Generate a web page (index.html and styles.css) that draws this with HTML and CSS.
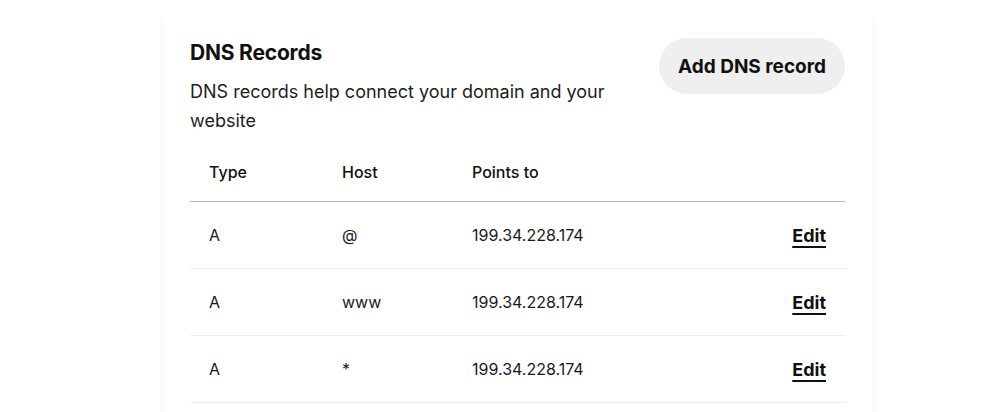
FILE: index.html
```html
<!DOCTYPE html>
<html lang="en">
<head>
<meta charset="utf-8">
<title>DNS Records</title>
<link rel="stylesheet" href="styles.css">
</head>
<body>
<main class="card">
  <header class="card-head">
    <div class="intro">
      <h2 class="title">DNS Records</h2>
      <p class="desc">DNS records help connect your domain and your website</p>
    </div>
    <button class="add-btn" type="button">Add DNS record</button>
  </header>
  <div class="table">
    <div class="row head">
      <span>Type</span><span>Host</span><span>Points to</span><span></span>
    </div>
    <div class="row">
      <span>A</span><span>@</span><span>199.34.228.174</span><a class="edit" href="#">Edit</a>
    </div>
    <div class="row">
      <span>A</span><span>www</span><span>199.34.228.174</span><a class="edit" href="#">Edit</a>
    </div>
    <div class="row">
      <span>A</span><span>*</span><span>199.34.228.174</span><a class="edit" href="#">Edit</a>
    </div>
  </div>
</main>
</body>
</html>
```
FILE: styles.css
```css
* { box-sizing: border-box; }
html, body {
  margin: 0;
  background: #ffffff;
  font-family: Inter, "Noto Sans", "Liberation Sans", sans-serif;
  color: #111111;
}
body {
  padding-top: 18px;
}
.card {
  width: 713px;
  margin-left: 161px;
  border-left: 1px solid #f1f1f1;
  border-right: 1px solid #f1f1f1;
  padding: 20px 28px 0 28px;
  min-height: 400px;
}
.card-head {
  display: flex;
  justify-content: space-between;
  align-items: flex-start;
}
.intro {
  max-width: 440px;
}
.title {
  margin: 0;
  padding-top: 1px;
  font-size: 21px;
  font-weight: 700;
  letter-spacing: -0.2px;
  line-height: 28px;
}
.desc {
  margin: 10px 0 0;
  font-size: 18px;
  line-height: 29px;
  color: #1d1d1d;
}
.add-btn {
  margin-top: 0;
  height: 56px;
  padding: 0 19px;
  border: none;
  border-radius: 28px;
  background: #efefef;
  font-family: inherit;
  font-size: 19px;
  font-weight: 700;
  color: #111111;
}
.table {
  margin-top: 9px;
}
.row {
  display: grid;
  grid-template-columns: 133px 130px 1fr auto;
  align-items: center;
  height: 67px;
  padding: 0 19px;
  font-size: 16px;
  color: #1a1a1a;
  border-bottom: 1px solid #eeeeee;
}
.row.head {
  height: 58px;
  padding-bottom: 2px;
  font-weight: 500;
  color: #111111;
  border-bottom-color: #b8b8b8;
}
.edit {
  color: #111111;
  font-size: 18px;
  font-weight: 700;
  text-decoration: underline;
  text-underline-offset: 4px;
  text-decoration-thickness: 2px;
}
```
